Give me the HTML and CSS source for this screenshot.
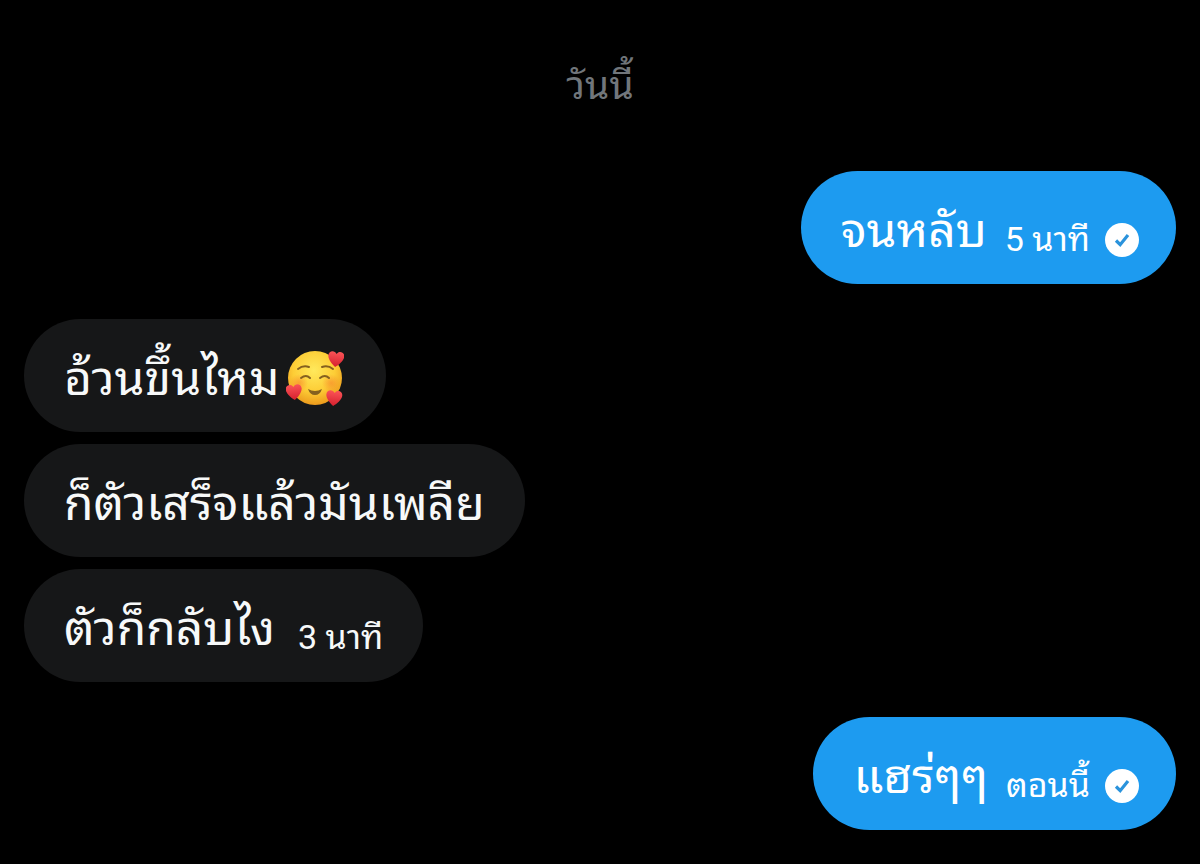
FILE: index.html
```html
<!DOCTYPE html>
<html lang="th">
<head>
  <meta charset="UTF-8">
  <meta name="viewport" content="width=device-width, initial-scale=1.0">
  <title>ข้อความ</title>
  <link rel="stylesheet" href="styles.css">
</head>
<body>
  <main class="chat">
    <h1 class="day">วันนี้</h1>

    <section class="group sent">
      <div class="bubble">
        <p class="text">จนหลับ</p>
        <span class="time">5 นาที</span>
        <svg class="check" viewBox="0 0 34 34" aria-hidden="true">
          <circle cx="17" cy="17" r="17" fill="#fff"/>
          <path d="M11 17.5l4.2 4.2L23 12" fill="none" stroke="#2a93dc" stroke-width="3.2"/>
        </svg>
      </div>
    </section>

    <section class="group received">
      <div class="bubble">
        <p class="text">อ้วนขึ้นไหม</p>
        <svg class="emoji" viewBox="0 0 58 58" aria-hidden="true">
          <defs>
            <radialGradient id="face" cx="48%" cy="36%" r="64%">
              <stop offset="0" stop-color="#ffe95c"/>
              <stop offset="0.6" stop-color="#fdcd36"/>
              <stop offset="1" stop-color="#ec9a1c"/>
            </radialGradient>
            <radialGradient id="blush">
              <stop offset="0" stop-color="#f5742a" stop-opacity="0.5"/>
              <stop offset="1" stop-color="#f5742a" stop-opacity="0"/>
            </radialGradient>
            <linearGradient id="red" x1="0" y1="0" x2="0" y2="1">
              <stop offset="0" stop-color="#fb5457"/>
              <stop offset="1" stop-color="#d5202e"/>
            </linearGradient>
            <path id="heart" d="M0 8C-3 6-8 1-8-3C-8-8-2-9 0-5C2-9 8-8 8-3C8 1 3 6 0 8Z" fill="url(#red)"/>
          </defs>
          <circle cx="29" cy="28" r="27" fill="url(#face)"/>
          <circle cx="13" cy="33" r="9" fill="url(#blush)"/>
          <circle cx="45" cy="33" r="9" fill="url(#blush)"/>
          <g fill="none" stroke="#84601f" stroke-width="2" stroke-linecap="round">
            <path d="M12 19q5-4 11-2M36 17q6-2 11 2"/>
            <path d="M15 28q5-4 9 0M34 28q5-4 9 0"/>
          </g>
          <path d="M22 39q7 4 14 0q-2 6-7 6t-7-6z" fill="#84601f"/>
          <use href="#heart" transform="translate(50 9) rotate(6)"/>
          <use href="#heart" transform="translate(8 42) rotate(-6)"/>
          <use href="#heart" transform="translate(48 48) rotate(6)"/>
        </svg>
      </div>
      <div class="bubble">
        <p class="text">ก็ตัวเสร็จแล้วมันเพลีย</p>
      </div>
      <div class="bubble">
        <p class="text">ตัวก็กลับไง</p>
        <span class="time">3 นาที</span>
      </div>
    </section>

    <section class="group sent">
      <div class="bubble">
        <p class="text">แฮร่ๆๆ</p>
        <span class="time">ตอนนี้</span>
        <svg class="check" viewBox="0 0 34 34" aria-hidden="true">
          <circle cx="17" cy="17" r="17" fill="#fff"/>
          <path d="M11 17.5l4.2 4.2L23 12" fill="none" stroke="#2a93dc" stroke-width="3.2"/>
        </svg>
      </div>
    </section>
  </main>
</body>
</html>
```

FILE: styles.css
```css
* {
  margin: 0;
  padding: 0;
  box-sizing: border-box;
}

body {
  background-color: #000;
  color: #f7f9f9;
  font-family: Roboto, "Noto Sans Thai Looped", "Noto Sans Thai", sans-serif;
}

.chat {
  display: flex;
  flex-direction: column;
  gap: 35px;
  padding: 56px 24px 32px;
}

.day {
  margin-bottom: 20px;
  color: #71767b;
  font-size: 39px;
  font-weight: normal;
  line-height: 60px;
  text-align: center;
}

.group {
  display: flex;
  flex-direction: column;
  gap: 12px;
}

.sent {
  align-items: flex-end;
}

.received {
  align-items: flex-start;
}

.bubble {
  display: flex;
  align-items: center;
  padding: 27px 40px 21px;
  border-radius: 57px;
  background-color: #161718;
}

.sent .bubble {
  padding-right: 37px;
  background-color: #1d9bf0;
  color: #fff;
}

.text {
  font-size: 48px;
  line-height: 65px;
}

.time {
  margin-left: 23px;
  padding-top: 17px;
  font-size: 34px;
  line-height: 48px;
}

.sent .time {
  margin-left: 18px;
}

.check {
  width: 34px;
  height: 34px;
  margin: 19px 0 0 15px;
}

.emoji {
  width: 58px;
  height: 58px;
  margin: 0 2px 0 7px;
}
```
